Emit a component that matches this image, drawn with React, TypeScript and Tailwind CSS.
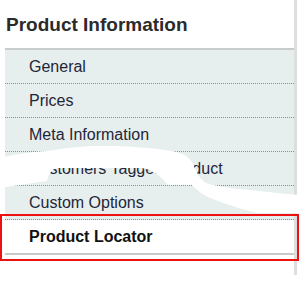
const TABS = ["General", "Prices", "Meta Information", "Customers Tagged Product", "Custom Options"];

function EraseMark() {
  // white brush stroke that covers part of the list in the screenshot
  return (
    <svg
      className="pointer-events-none absolute left-0 top-0"
      width="300"
      height="295"
      viewBox="0 0 300 295"
    >
      <path
        d="M0 158 C15 154 30 152 47 151 C65 148 85 146 102 146 C130 146 155 148 172 151 C182 153 188 156 192 162 C196 170 198 178 206 183 C222 188 240 189 260 191 C275 193 288 194 300 195 L300 213 L258 213 C240 209 222 203 208 197 C200 193 196 189 192 185 L168 185 C162 178 156 171 142 168 L58 168 C51 169 49 174 47 181 C30 183 15 186 0 188 Z"
        fill="#ffffff"
      />
    </svg>
  );
}

export default function App() {
  return (
    <div className="relative h-[295px] w-[300px] overflow-hidden bg-white font-['Liberation_Sans',Arial,sans-serif]">
      <div className="h-[275px] w-[297px] border-r-[3px] border-[#dedede]">
        <h3 className="pl-[6px] pt-[13px] text-[19px] font-bold leading-[24px] text-[#2b2b2b]">
          Product Information
        </h3>
        <ul className="ml-[5px] mt-[11px] border-t-2 border-[#c9cccc] bg-[#e7eeee]">
          {TABS.map((tab) => (
            <li
              key={tab}
              className="flex h-[34px] items-center border-b border-dotted border-[#8c8c8c] pl-[24px] text-[16px] text-[#1f2638]"
            >
              {tab}
            </li>
          ))}
          <li className="flex h-[35px] items-center border-b-2 border-[#c9c9c9] bg-white pl-[24px] text-[16px] font-bold text-[#111111]">
            Product Locator
          </li>
        </ul>
      </div>
      <EraseMark />
      <div className="pointer-events-none absolute left-0 top-[214px] h-[47px] w-[299px] border-2 border-[#ee1111]" />
    </div>
  );
}
